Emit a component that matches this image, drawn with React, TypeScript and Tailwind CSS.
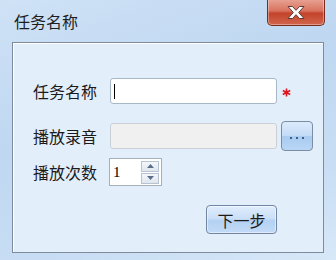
import React from 'react'

const cjk = { fontFamily: '"Microsoft YaHei", "Noto Sans CJK SC", sans-serif' }

const CloseButton: React.FC = () => (
  <button className="w-[58px] h-[27px] mt-[-1px] mr-[11px] rounded-b-[5px] border border-[#7a2b20] border-t-0 bg-[linear-gradient(#e8a496_0%,#d9735f_45%,#c4432b_55%,#d0664d_100%)] shadow-[inset_0_0_0_1px_rgba(255,255,255,0.35)] flex items-center justify-center">
    <svg width="20" height="15" viewBox="0 0 20 15">
      <path
        d="M2 1.5h4.5L10 5.3l3.5-3.8H18l-5.3 6 5.3 6h-4.5L10 9.7l-3.5 3.8H2l5.3-6z"
        fill="#ffffff"
        stroke="#5e3a34"
        strokeWidth="1"
        strokeLinejoin="round"
      />
    </svg>
  </button>
)

const Label: React.FC<{ children: React.ReactNode }> = ({ children }) => (
  <span className="w-[77px] shrink-0 text-[16px] text-[#1b1b1b] leading-none" style={cjk}>
    {children}
  </span>
)

export default function App() {
  return (
    <div className="w-[336px] h-[260px] flex flex-col bg-[linear-gradient(160deg,#cfe2f6_0%,#bfd7f1_40%,#c9def4_75%,#d7e8f8_100%)] overflow-hidden">
      {/* title bar */}
      <div className="h-[42px] shrink-0 flex items-start justify-between">
        <span className="pl-[14px] pt-[13px] text-[16px] text-[#1e1e1e] leading-none" style={cjk}>
          任务名称
        </span>
        <CloseButton />
      </div>

      {/* client area */}
      <div className="mx-[12px] h-[211px] shrink-0 border border-[#7d8b9c] shadow-[inset_1px_1px_0_#ffffff] bg-[#e3eefb] flex flex-col pl-[20px] pt-[35px]">
        <div className="flex items-center h-[26px]">
          <Label>任务名称</Label>
          <div className="w-[167px] h-[26px] bg-white border border-[#a9b8c8] rounded-[3px] flex items-center pl-[3px]">
            <span className="w-px h-[15px] bg-[#000]" />
          </div>
          <svg className="ml-[5px] mt-[2px]" width="9" height="9" viewBox="0 0 9 9">
            <path d="M4.5 0.5v8M0.8 2.5l7.4 4M0.8 6.5l7.4-4" stroke="#e0141e" strokeWidth="1.6" />
          </svg>
        </div>

        <div className="flex items-center h-[30px] mt-[17px]">
          <Label>播放录音</Label>
          <div className="w-[167px] h-[26px] bg-[#f0f0f0] border border-[#c9d0d8] rounded-[3px]" />
          <button className="ml-[4px] w-[32px] h-[30px] rounded-[4px] border border-[#7b8da3] bg-[linear-gradient(#dcebfc_0%,#c3dbf6_50%,#a9cbf1_52%,#b9d6f5_100%)] flex items-center justify-center pt-[4px] gap-[4px]">
            <span className="w-[2px] h-[2px] bg-[#3a5f8a]" />
            <span className="w-[2px] h-[2px] bg-[#3a5f8a]" />
            <span className="w-[2px] h-[2px] bg-[#3a5f8a]" />
          </button>
        </div>

        <div className="flex items-center h-[28px] mt-[7px]">
          <span className="w-[76px] shrink-0 text-[16px] text-[#1b1b1b] leading-none" style={cjk}>
            播放次数
          </span>
          <div className="w-[53px] h-[28px] bg-white border border-[#a7afb8] flex items-center">
            <span className="pl-[3px] w-[31px] text-[15px] leading-none text-black" style={{ fontFamily: '"Liberation Serif", serif' }}>
              1
            </span>
            <div className="flex flex-col gap-px w-[18px]">
              <div className="h-[11px] border border-[#b7c3d0] bg-[linear-gradient(#f4f7fa,#dfe6ee)] flex items-center justify-center">
                <svg width="7" height="4" viewBox="0 0 7 4"><path d="M3.5 0L7 4H0z" fill="#5a6e8c" /></svg>
              </div>
              <div className="h-[11px] border border-[#b7c3d0] bg-[linear-gradient(#f4f7fa,#dfe6ee)] flex items-center justify-center">
                <svg width="7" height="4" viewBox="0 0 7 4"><path d="M0 0H7L3.5 4z" fill="#5a6e8c" /></svg>
              </div>
            </div>
          </div>
        </div>

        <div className="flex justify-end mt-[19px] pr-[46px]">
          <button className="w-[71px] h-[29px] rounded-[4px] border border-[#6f85a0] bg-[linear-gradient(#e0edfc_0%,#c9def7_48%,#b3d1f3_52%,#c2daf6_100%)] shadow-[inset_0_0_0_1px_rgba(255,255,255,0.5)] flex items-center justify-center">
            <span className="text-[16px] leading-none text-[#1b1b1b]" style={cjk}>下一步</span>
          </button>
        </div>
      </div>
    </div>
  )
}
